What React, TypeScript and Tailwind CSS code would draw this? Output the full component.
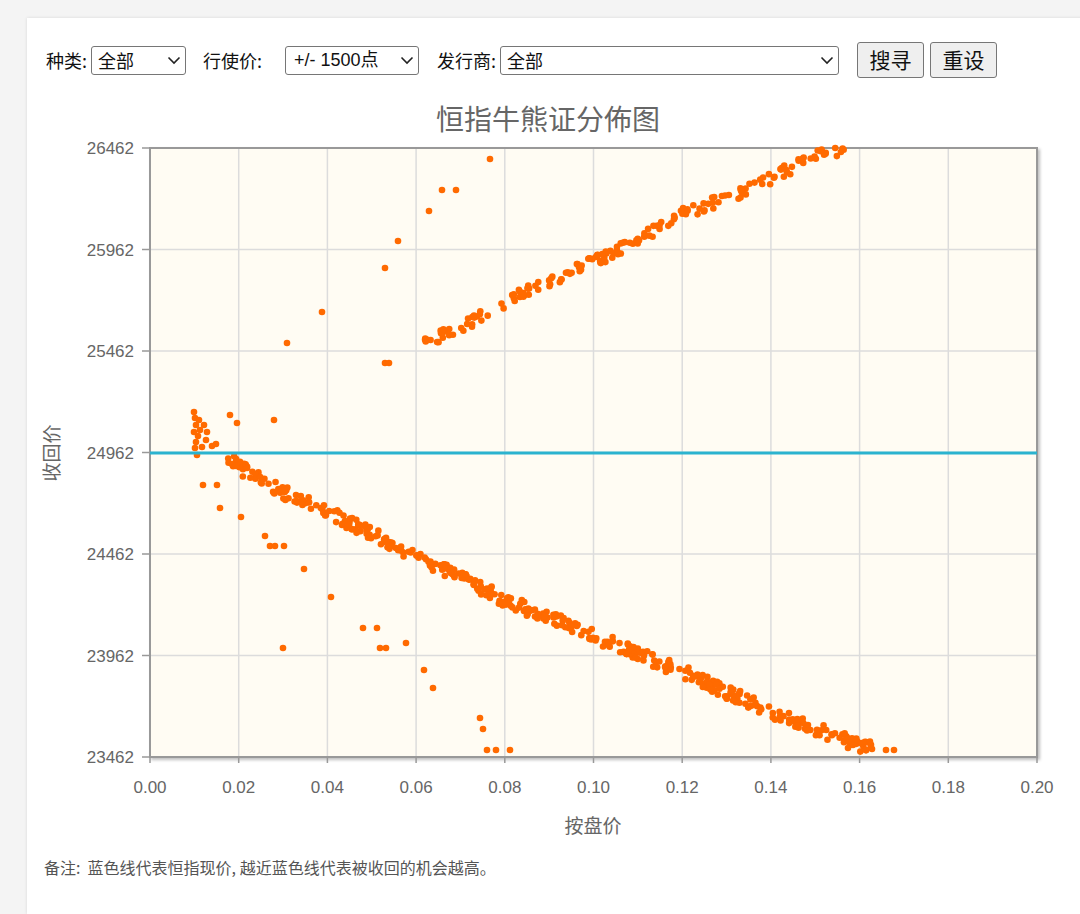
import React from 'react';

const X0 = 150, X1 = 1037, Y0 = 148, Y1 = 757;

// simple seeded random so the scatter is stable
function rng(seed: number) {
  let s = seed;
  return () => {
    s = (s * 16807) % 2147483647;
    return (s - 1) / 2147483646;
  };
}

function interp(pts: [number, number][], x: number) {
  for (let i = 0; i < pts.length - 1; i++) {
    const [ax, ay] = pts[i];
    const [bx, by] = pts[i + 1];
    if (x >= ax && x <= bx) return ay + ((x - ax) / (bx - ax)) * (by - ay);
  }
  return pts[pts.length - 1][1];
}

const lower: [number, number][] = [[228, 458], [240, 468], [283, 492], [328, 512], [417, 557], [505, 600], [594, 636], [683, 672], [771, 712], [860, 745], [896, 752]];
const upper: [number, number][] = [[425, 343], [460, 328], [505, 302], [549, 282], [594, 262], [638, 240], [683, 214], [727, 198], [771, 178], [815, 156], [850, 148]];

const outliers: [number, number][] = [
  [287, 343], [322, 312], [385, 268], [398, 241], [429, 211], [442, 190], [456, 190], [490, 159],
  [385, 363], [389, 363], [283, 648], [304, 569], [331, 597], [363, 628], [377, 628], [380, 648],
  [386, 648], [406, 643], [424, 670], [433, 688], [480, 718], [483, 729], [487, 750], [496, 750],
  [510, 750], [203, 485], [217, 485], [220, 508], [230, 415], [241, 517], [237, 423], [274, 420],
  [265, 536], [270, 546], [275, 546], [284, 546], [232, 464], [236, 466], [247, 468],
  [194, 412], [195, 418], [196, 425], [194, 432], [198, 436], [196, 442], [195, 448], [197, 455],
  [200, 430], [204, 425], [206, 440], [212, 446], [216, 444], [202, 447], [199, 420], [207, 432],
  [866, 750], [872, 749], [886, 750], [894, 750], [848, 748], [853, 745],
];

function buildPoints() {
  const r = rng(42);
  const pts: [number, number][] = [];
  for (let i = 0; i < 430; i++) {
    const x = 228 + r() * (872 - 228);
    pts.push([x, interp(lower, x) + (r() - 0.5) * 14]);
  }
  for (let i = 0; i < 190; i++) {
    const x = 425 + r() * (848 - 425);
    pts.push([x, interp(upper, x) + (r() - 0.5) * 12]);
  }
  return pts.concat(outliers).filter(([, y]) => y >= Y0 && y <= Y1);
}

const points = buildPoints();
const yTicks = [26462, 25962, 25462, 24962, 24462, 23962, 23462];
const xTicks = ['0.00', '0.02', '0.04', '0.06', '0.08', '0.10', '0.12', '0.14', '0.16', '0.18', '0.20'];
const cjk = '"Noto Sans CJK SC", sans-serif';

const Chart: React.FC = () => {
  const dx = (X1 - X0) / 10;
  const dy = (Y1 - Y0) / 6;
  return (
    <svg width={1053} height={750} viewBox="27 95 1053 750" className="block" style={{ fontFamily: '"Liberation Sans", Arial, sans-serif' }}>
      <text x={548} y={130} textAnchor="middle" fontSize={28} fill="#666" fontFamily={cjk}>恒指牛熊证分佈图</text>
      <defs>
        <filter id="sh" x="-5%" y="-5%" width="110%" height="110%">
          <feDropShadow dx={2} dy={2} stdDeviation={1.5} floodColor="#000" floodOpacity={0.25} />
        </filter>
      </defs>
      <rect x={X0} y={Y0} width={X1 - X0} height={Y1 - Y0} fill="#fffcf3" stroke="#999" strokeWidth={2} filter="url(#sh)" />
      {xTicks.map((_, i) => (
        <line key={'gx' + i} x1={X0 + i * dx} x2={X0 + i * dx} y1={Y0} y2={Y1} stroke="#dcdcdc" strokeWidth={1.5} />
      ))}
      {yTicks.map((_, i) => (
        <line key={'gy' + i} x1={X0} x2={X1} y1={Y0 + i * dy} y2={Y0 + i * dy} stroke="#dcdcdc" strokeWidth={1.5} />
      ))}
      <rect x={X0} y={Y0} width={X1 - X0} height={Y1 - Y0} fill="none" stroke="#999" strokeWidth={2} />
      {yTicks.map((t, i) => (
        <g key={'ty' + t}>
          <line x1={X0 - 8} x2={X0} y1={Y0 + i * dy} y2={Y0 + i * dy} stroke="#999" strokeWidth={1.5} />
          <text x={134} y={Y0 + i * dy + 6} textAnchor="end" fontSize={17} fill="#666">{t}</text>
        </g>
      ))}
      {xTicks.map((t, i) => (
        <g key={'tx' + t}>
          <line x1={X0 + i * dx} x2={X0 + i * dx} y1={Y1} y2={Y1 + 6} stroke="#999" strokeWidth={1.5} />
          <text x={X0 + i * dx} y={793} textAnchor="middle" fontSize={17} fill="#666">{t}</text>
        </g>
      ))}
      <text x={593} y={833} textAnchor="middle" fontSize={19} fill="#666" fontFamily={cjk}>按盘价</text>
      <text x={59} y={453} textAnchor="middle" fontSize={19} fill="#666" fontFamily={cjk} transform="rotate(-90 59 453)">收回价</text>
      {points.map(([x, y], i) => (
        <circle key={i} cx={x} cy={y} r={3.3} fill="#ff6a00" />
      ))}
      <line x1={X0} x2={X1} y1={453} y2={453} stroke="#2bb3cf" strokeWidth={3} />
    </svg>
  );
};

const selectCls = 'h-[29px] border border-[#767676] rounded-[3px] bg-white px-1 text-[18px] flex items-center justify-between';

const Chevron = () => (
  <svg width="14" height="9" viewBox="0 0 14 9"><path d="M1.5 1.5 L7 7 L12.5 1.5" fill="none" stroke="#222" strokeWidth="1.6" /></svg>
);

export default function App() {
  return (
    <div className="min-h-[914px] bg-[#f4f4f4] overflow-hidden pt-[18px] pl-[27px]" style={{ fontFamily: '"Liberation Sans", Arial, "Noto Sans CJK SC", sans-serif' }}>
      <div className="bg-white w-[1100px] min-h-[896px] pt-[24px] shadow-[0_0_3px_rgba(0,0,0,0.12)]">
        <div className="flex items-center h-[36px] pl-[19px] text-[18px] text-[#111] mb-[17px]" style={{ fontFamily: '"Noto Sans CJK SC", "Liberation Sans", sans-serif' }}>
          <span>种类:</span>
          <div className={`${selectCls} ml-[4px] w-[95px]`}><span className="pl-[2px]">全部</span><Chevron /></div>
          <span className="ml-[17px]">行使价:</span>
          <div className={`${selectCls} ml-[23px] w-[134px]`} style={{ fontFamily: '"Liberation Sans", "Noto Sans CJK SC", sans-serif' }}><span className="pl-[4px]">+/- 1500点</span><Chevron /></div>
          <span className="ml-[18px]">发行商:</span>
          <div className={`${selectCls} ml-[4px] w-[339px]`}><span className="pl-[2px]">全部</span><Chevron /></div>
          <button className="ml-[18px] w-[67px] h-[36px] border border-[#767676] rounded-[3px] bg-[#efefef] text-[21px]">搜寻</button>
          <button className="ml-[6px] w-[67px] h-[36px] border border-[#767676] rounded-[3px] bg-[#efefef] text-[21px]">重设</button>
        </div>
        <Chart />
        <p className="mt-[12px] pl-[17px] text-[16px] text-[#555] leading-[20px]" style={{ fontFamily: '"Noto Sans CJK SC", sans-serif' }}>备注:&nbsp; 蓝色线代表恒指现价, 越近蓝色线代表被收回的机会越高。</p>
      </div>
    </div>
  );
}
